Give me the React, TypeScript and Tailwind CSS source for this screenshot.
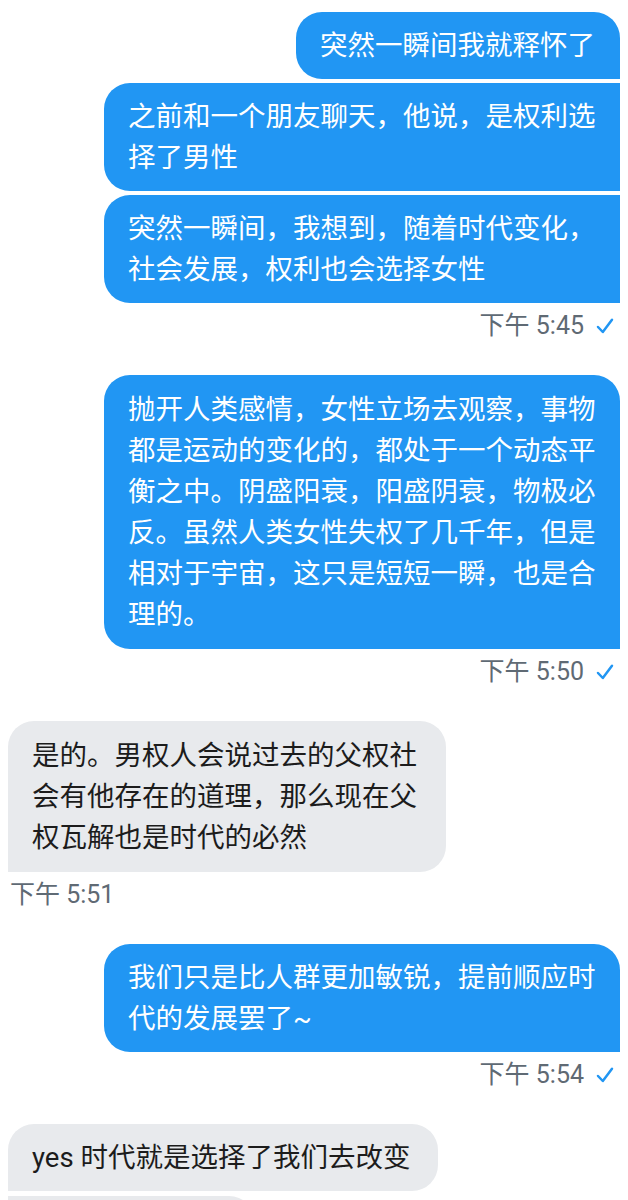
import React from "react";

const FONT = "font-['Roboto','Noto_Sans_CJK_SC',sans-serif]";

function Check() {
  return (
    <svg width="18" height="16" viewBox="0 0 18 16" className="ml-[12px]">
      <path d="M2 9 L6.8 14 L16 1.8" fill="none" stroke="#2196f3" strokeWidth="2.5" strokeLinecap="round" strokeLinejoin="round" />
    </svg>
  );
}

function TimeRight({ t }: { t: string }) {
  return (
    <div className="flex items-center justify-end pr-[14px] mt-[8px] h-[30px] text-[25px] leading-[30px] text-[#5f6a74]">
      <span>{t}</span>
      <Check />
    </div>
  );
}

function TimeLeft({ t }: { t: string }) {
  return (
    <div className="flex items-center pl-[10px] mt-[8px] h-[30px] text-[25px] leading-[30px] text-[#5f6a74]">
      <span>{t}</span>
    </div>
  );
}

function Lines({ lines }: { lines: string[] }) {
  return (
    <>
      {lines.map((l, i) => (
        <div key={i} className="whitespace-nowrap">
          {l}
        </div>
      ))}
    </>
  );
}

export default function App() {
  return (
    <div className={`${FONT} bg-white w-[628px] h-[1200px] overflow-hidden pt-[12px] text-[27.5px] leading-[41px]`}>
      {/* group 1 */}
      <div className="flex flex-col items-end pr-[8px] gap-[4px]">
        <div className="w-[324px] bg-[#2196f3] text-white pl-[24px] py-[13px] rounded-t-[26px] rounded-bl-[26px]">
          <Lines lines={["突然一瞬间我就释怀了"]} />
        </div>
        <div className="w-[516px] bg-[#2196f3] text-white pl-[24px] py-[13px] rounded-l-[26px]">
          <Lines lines={["之前和一个朋友聊天，他说，是权利选", "择了男性"]} />
        </div>
        <div className="w-[516px] bg-[#2196f3] text-white pl-[24px] py-[13px] rounded-l-[26px]">
          <Lines lines={["突然一瞬间，我想到，随着时代变化，", "社会发展，权利也会选择女性"]} />
        </div>
      </div>
      <TimeRight t="下午 5:45" />

      {/* group 2 */}
      <div className="flex flex-col items-end pr-[8px] mt-[34px]">
        <div className="w-[516px] bg-[#2196f3] text-white pl-[24px] py-[14px] rounded-t-[26px] rounded-bl-[26px]">
          <Lines
            lines={[
              "抛开人类感情，女性立场去观察，事物",
              "都是运动的变化的，都处于一个动态平",
              "衡之中。阴盛阳衰，阳盛阴衰，物极必",
              "反。虽然人类女性失权了几千年，但是",
              "相对于宇宙，这只是短短一瞬，也是合",
              "理的。",
            ]}
          />
        </div>
      </div>
      <TimeRight t="下午 5:50" />

      {/* group 3 */}
      <div className="flex flex-col items-start pl-[8px] mt-[34px]">
        <div className="w-[438px] bg-[#e8eaed] text-[#1c1c1c] pl-[24px] py-[14px] rounded-t-[26px] rounded-br-[26px]">
          <Lines lines={["是的。男权人会说过去的父权社", "会有他存在的道理，那么现在父", "权瓦解也是时代的必然"]} />
        </div>
      </div>
      <TimeLeft t="下午 5:51" />

      {/* group 4 */}
      <div className="flex flex-col items-end pr-[8px] mt-[34px]">
        <div className="w-[516px] bg-[#2196f3] text-white pl-[24px] py-[13px] rounded-t-[26px] rounded-bl-[26px]">
          <Lines lines={["我们只是比人群更加敏锐，提前顺应时", "代的发展罢了~"]} />
        </div>
      </div>
      <TimeRight t="下午 5:54" />

      {/* group 5 */}
      <div className="flex flex-col items-start pl-[8px] mt-[34px] gap-[5px]">
        <div className="w-[430px] bg-[#e8eaed] text-[#1c1c1c] pl-[24px] py-[13px] rounded-t-[26px] rounded-br-[26px]">
          <Lines lines={["yes 时代就是选择了我们去改变"]} />
        </div>
        <div className="w-[247px] h-[67px] bg-[#e8eaed] rounded-r-[26px]" />
      </div>
    </div>
  );
}
